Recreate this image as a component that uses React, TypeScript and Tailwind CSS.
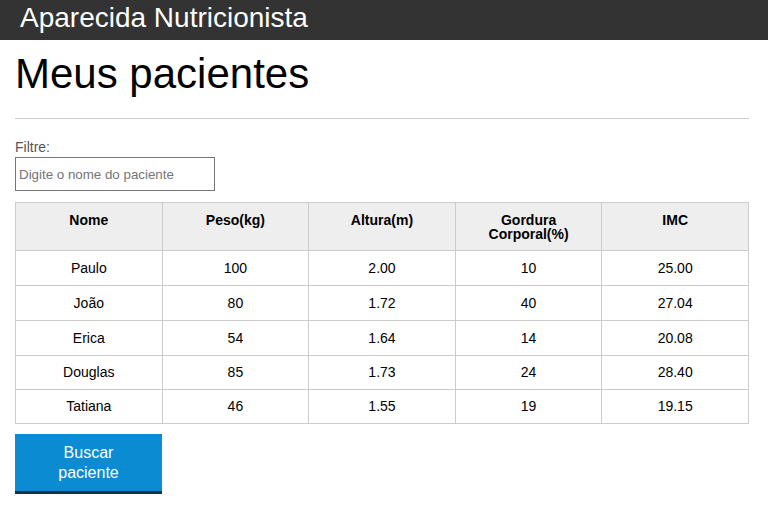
import React from "react";

const pacientes = [
  { nome: "Paulo", peso: "100", altura: "2.00", gordura: "10", imc: "25.00", h: "h-[35px]" },
  { nome: "João", peso: "80", altura: "1.72", gordura: "40", imc: "27.04", h: "h-[35px]" },
  { nome: "Erica", peso: "54", altura: "1.64", gordura: "14", imc: "20.08", h: "h-[35px]" },
  { nome: "Douglas", peso: "85", altura: "1.73", gordura: "24", imc: "28.40", h: "h-[34px]" },
  { nome: "Tatiana", peso: "46", altura: "1.55", gordura: "19", imc: "19.15", h: "h-[34px]" },
];

export default function App() {
  return (
    <div className="min-h-[505px] bg-white text-black" style={{ fontFamily: '"Liberation Sans", Arial, sans-serif' }}>
      <header className="h-[40px] bg-[#333333] pl-[20px]">
        <h2 className="text-[28px] leading-[36px] text-white">Aparecida Nutricionista</h2>
      </header>
      <main className="pl-[15px]">
        <div className="w-[734px]">
          <h1 className="mt-[10px] text-[42px] leading-[48px]">Meus pacientes</h1>
          <hr className="mt-[20px] border-0 border-t border-[#cfcfcf]" />
          <label htmlFor="filtro" className="mt-[20px] block text-[14px] leading-[16px] text-[#555555]">
            Filtre:
          </label>
          <input
            id="filtro"
            type="text"
            placeholder="Digite o nome do paciente"
            className="mt-[2px] block h-[34px] w-[200px] border border-[#767676] px-[3px] text-[13.33px] outline-none placeholder:text-[#757575]"
          />
          <table className="mt-[11px] w-[734px] table-fixed border-collapse text-[14px]">
            <thead>
              <tr className="bg-[#eeeeee]">
                {["Nome", "Peso(kg)", "Altura(m)", "Gordura Corporal(%)", "IMC"].map((t) => (
                  <th
                    key={t}
                    className="h-[47px] border border-[#cccccc] px-[30px] pt-[10px] pb-[9px] text-center align-top font-bold leading-[14px]"
                  >
                    {t}
                  </th>
                ))}
              </tr>
            </thead>
            <tbody>
              {pacientes.map((p) => (
                <tr key={p.nome} className={p.h}>
                  <td className="border border-[#cccccc] text-center align-middle">{p.nome}</td>
                  <td className="border border-[#cccccc] text-center align-middle">{p.peso}</td>
                  <td className="border border-[#cccccc] text-center align-middle">{p.altura}</td>
                  <td className="border border-[#cccccc] text-center align-middle">{p.gordura}</td>
                  <td className="border border-[#cccccc] text-center align-middle">{p.imc}</td>
                </tr>
              ))}
            </tbody>
          </table>
          <button
            type="button"
            className="mt-[10px] block w-[147px] border-b-[3px] border-[#073451] bg-[#0b8bd2] pt-[9px] pb-[8px] text-center text-[16px] leading-[20px] text-white"
          >
            Buscar
            <br />
            paciente
          </button>
        </div>
      </main>
    </div>
  );
}
